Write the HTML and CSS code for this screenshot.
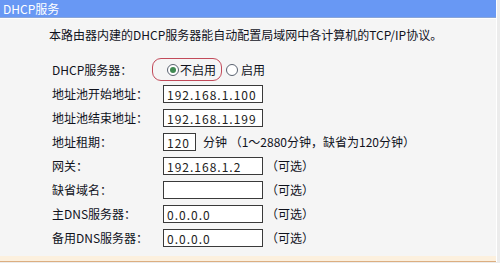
FILE: index.html
```html
<!DOCTYPE html>
<html lang="zh-CN">
<head>
    <meta charset="UTF-8">
    <title>DHCP服务</title>
    <link rel="stylesheet" href="styles.css">
</head>
<body>
    <div class="panel">
        <div class="panel-title">DHCP服务</div>
        <div class="panel-body">
            <p class="intro">本路由器内建的DHCP服务器能自动配置局域网中各计算机的TCP/IP协议。</p>

            <div class="form">
                <div class="row">
                    <span class="row-label">DHCP服务器：</span>
                    <div class="radio-group">
                        <span class="radio checked"></span><span class="radio-text">不启用</span>
                        <span class="radio second"></span><span class="radio-text">启用</span>
                    </div>
                    <span class="highlight"></span>
                </div>
                <div class="row">
                    <span class="row-label">地址池开始地址：</span>
                    <input class="field" type="text" value="192.168.1.100">
                </div>
                <div class="row">
                    <span class="row-label">地址池结束地址：</span>
                    <input class="field" type="text" value="192.168.1.199">
                </div>
                <div class="row">
                    <span class="row-label">地址租期：</span>
                    <input class="field short" type="text" value="120">
                    <span class="hint">分钟 （1～2880分钟，缺省为120分钟）</span>
                </div>
                <div class="row">
                    <span class="row-label">网关：</span>
                    <input class="field" type="text" value="192.168.1.2">
                    <span class="optional">（可选）</span>
                </div>
                <div class="row">
                    <span class="row-label">缺省域名：</span>
                    <input class="field" type="text" value="">
                    <span class="optional">（可选）</span>
                </div>
                <div class="row">
                    <span class="row-label">主DNS服务器：</span>
                    <input class="field" type="text" value="0.0.0.0">
                    <span class="optional">（可选）</span>
                </div>
                <div class="row">
                    <span class="row-label">备用DNS服务器：</span>
                    <input class="field" type="text" value="0.0.0.0">
                    <span class="optional">（可选）</span>
                </div>
            </div>
        </div>
        <div class="panel-foot"></div>
    </div>
</body>
</html>
```

FILE: styles.css
```css
* {
    margin: 0;
    padding: 0;
    box-sizing: border-box;
}

body {
    font-family: "Noto Sans CJK SC", "DejaVu Sans", sans-serif;
    font-size: 12px;
    color: #10121c;
    background: #ececec;
    height: 263px;
    overflow: hidden;
}

.panel {
    width: 497px;
    background: #f5f5f5;
    border-right: 1px solid #fff;
}

.panel-title {
    height: 18px;
    line-height: 17px;
    padding-left: 3px;
    background: #6898f4;
    border-bottom: 1px solid #8aa6d8;
    color: #fff;
    font-size: 12px;
}

.panel-body {
    border-top: 1px solid #fff;
    padding: 8px 0 0 49px;
}

.intro {
    line-height: 16px;
    height: 16px;
    margin-bottom: 15px;
}

.form {
    padding-left: 3px;
}

.row {
    position: relative;
    display: flex;
    align-items: center;
    height: 24px;
}

.row-label {
    width: 111px;
    flex-shrink: 0;
    line-height: 16px;
}

.radio-group {
    display: flex;
    align-items: center;
    padding-left: 4px;
}

.radio {
    width: 12px;
    height: 12px;
    border: 1px solid #5a6270;
    border-radius: 50%;
    background: #fff;
    position: relative;
    margin-right: 1px;
}

.radio.checked::after {
    content: "";
    position: absolute;
    left: 2px;
    top: 2px;
    width: 6px;
    height: 6px;
    border-radius: 50%;
    background: #3f8a52;
}

.radio.second {
    margin-left: 10px;
    margin-right: 3px;
}

.radio-text {
    line-height: 16px;
}

.highlight {
    position: absolute;
    left: 100px;
    top: 0;
    width: 70px;
    height: 23px;
    border: 1px solid #c24a5a;
    border-radius: 9px;
}

.field {
    width: 100px;
    height: 18px;
    border: 1px solid #3a3a3a;
    background: #fff;
    padding: 0 3px;
    font-family: "Noto Sans CJK SC", "DejaVu Sans", sans-serif;
    font-size: 12px;
    letter-spacing: 1px;
    color: #222;
    outline: none;
}

.field.short {
    width: 33px;
}

.hint {
    margin-left: 7px;
    line-height: 16px;
}

.optional {
    margin-left: 3px;
    line-height: 16px;
}

.panel-foot {
    margin-top: 6px;
    height: 6px;
    background: #fcf0de;
    border-bottom: 1px solid #dcae80;
}
```
